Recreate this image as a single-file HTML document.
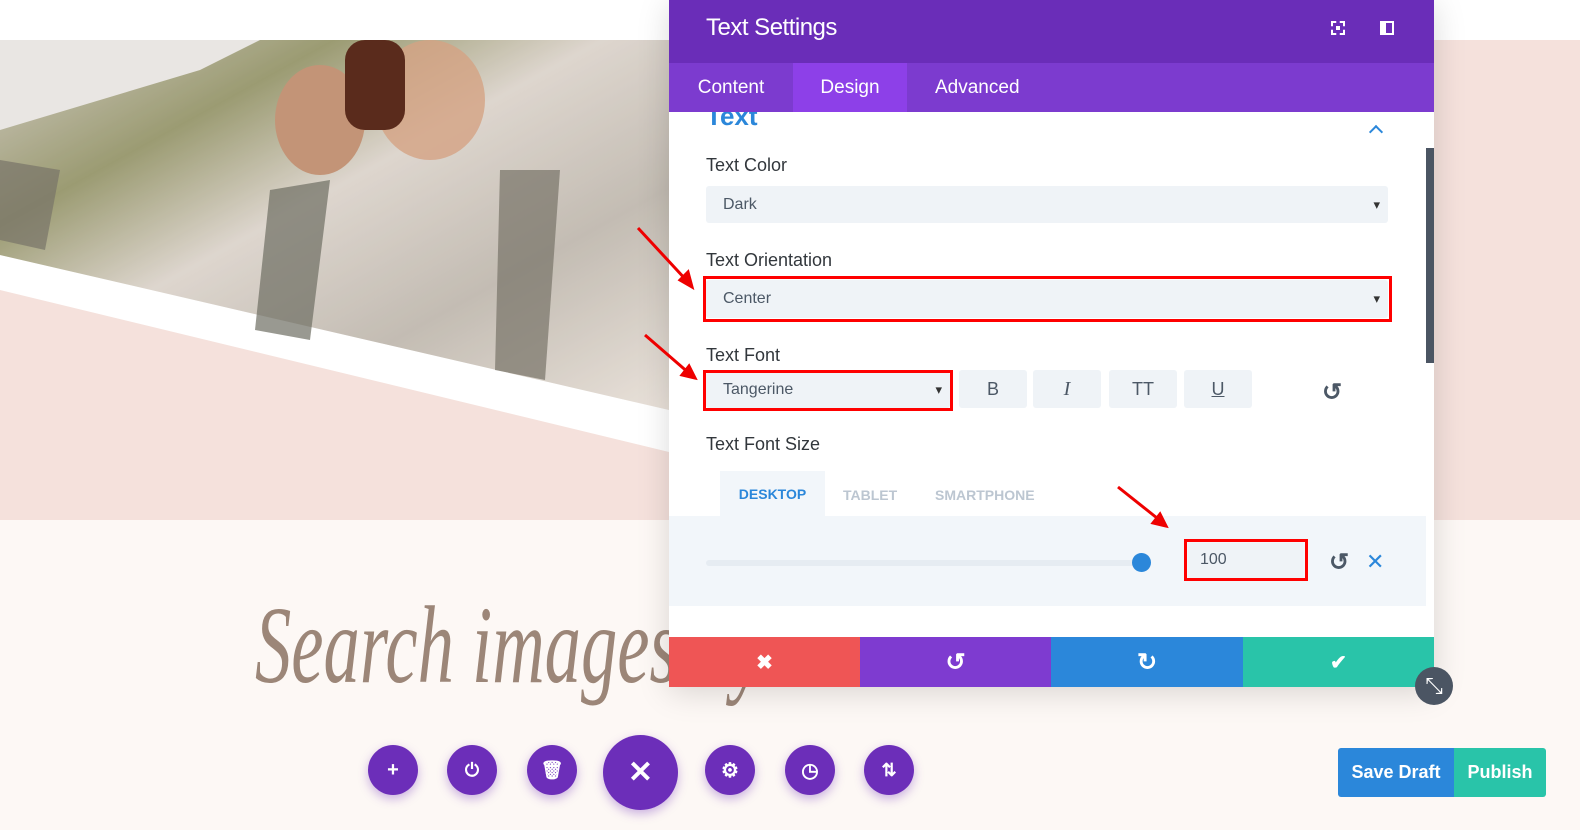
<!DOCTYPE html>
<html><head><meta charset="utf-8"><style>
*{margin:0;padding:0;box-sizing:border-box}
body{width:1580px;height:830px;overflow:hidden;position:relative;background:#fdf8f5;font-family:"Liberation Sans",sans-serif}
.abs{position:absolute}
.lbl{position:absolute;left:37px;font-size:18px;color:#32373c}
.sel{position:absolute;background:#eff3f7;border-radius:3px;font-size:16px;color:#4c5866;padding-left:17px;display:flex;align-items:center}
.sel:after{content:"▾";position:absolute;right:8px;font-size:13px;color:#333}
.red{position:absolute;border:3px solid #f00}
.fb{position:absolute;top:370px;width:68px;height:38px;background:#eff3f7;border-radius:3px;display:flex;align-items:center;justify-content:center;font-size:18px;color:#4c5866}
.circ{position:absolute;width:50px;height:50px;border-radius:50%;background:#6c2eb9;box-shadow:0 4px 10px rgba(108,46,185,.35);display:flex;align-items:center;justify-content:center;color:#fff;font-size:20px;font-weight:bold}
</style></head><body>
<div class="abs" style="left:0;top:0;width:1580px;height:40px;background:#fff"></div>
<div class="abs" style="left:0;top:40px;width:1580px;height:480px;background:#f5e1dc"></div>
<svg class="abs" style="left:0;top:40px" width="669" height="420">
<defs><linearGradient id="g" x1="0" y1="0" x2="1" y2="1">
<stop offset="0" stop-color="#c9c2b8"/><stop offset=".25" stop-color="#8a8a5a"/><stop offset=".45" stop-color="#d8cfc6"/><stop offset=".7" stop-color="#b9b1a6"/><stop offset="1" stop-color="#e6ddd4"/></linearGradient></defs>
<polygon points="0,205 0,250 669,412 669,360" fill="#fff"/>
<polygon points="0,0 669,0 669,370 0,215" fill="url(#g)"/>
<polygon points="0,0 669,0 669,370 0,215" fill="#ffffff" opacity=".15"/>
<polygon points="0,0 260,0 200,30 0,90" fill="#e9e6e3"/>
<ellipse cx="320" cy="80" rx="45" ry="55" fill="#c39477"/>
<ellipse cx="430" cy="60" rx="55" ry="60" fill="#d4a383" opacity=".8"/>
<rect x="345" y="0" width="60" height="90" rx="20" fill="#5a2b1c"/>
<polygon points="270,150 330,140 310,300 255,290" fill="#6e6e63" opacity=".7"/>
<polygon points="500,130 560,130 545,340 495,330" fill="#777468" opacity=".7"/>
<polygon points="0,120 60,130 45,210 0,200" fill="#777468" opacity=".7"/>
</svg>
<div class="abs" style="left:0;top:520px;width:1580px;height:310px;background:#fdf8f5"></div>
<div class="abs" style="left:255px;top:582px;font-family:'Liberation Serif',serif;font-style:italic;font-size:110px;color:#9c8678;white-space:nowrap;transform:scaleX(0.66);transform-origin:0 0">Search images by last name</div>

<!-- panel -->
<div class="abs" style="left:669px;top:0;width:765px;height:687px;background:#fff;box-shadow:0 5px 30px rgba(0,0,0,.15);overflow:hidden">
 <div class="abs" style="left:0;top:0;width:765px;height:63px;background:#6a2db8"></div>
 <div class="abs" style="left:37px;top:14px;font-size:24px;color:#fff;letter-spacing:-.5px">Text Settings</div>
 <div class="abs" style="left:662px;top:21px;width:14px;height:14px;border:2px dashed #fff"><div style="margin:3px;width:4px;height:4px;background:#fff"></div></div>
 <div class="abs" style="left:711px;top:21px;width:14px;height:14px;border:2px solid #fff;border-left-width:6px"></div>
 <div class="abs" style="left:0;top:63px;width:765px;height:49px;background:#7c3bcf"></div>
 <div class="abs" style="left:0;top:63px;width:124px;height:49px;background:#7c3bcf;color:#fff;font-size:19px;display:flex;align-items:center;justify-content:center">Content</div>
 <div class="abs" style="left:124px;top:63px;width:114px;height:49px;background:#8d40e8;color:#fff;font-size:19px;display:flex;align-items:center;justify-content:center">Design</div>
 <div class="abs" style="left:266px;top:63px;height:49px;color:#fff;font-size:19px;display:flex;align-items:center">Advanced</div>
 <div class="abs" style="left:37px;font-size:26px;color:#2b87da;font-weight:bold;height:16px;overflow:hidden;top:112px"><div style="margin-top:-11px">Text</div></div>
 <div class="abs" style="left:702px;top:127px;width:10px;height:10px;border-left:2.5px solid #2b87da;border-top:2.5px solid #2b87da;transform:rotate(45deg)"></div>
 <div class="abs" style="left:757px;top:148px;width:8px;height:215px;background:#4b5563"></div>
 <div class="lbl" style="top:155px">Text Color</div>
 <div class="sel" style="left:37px;top:186px;width:682px;height:37px">Dark</div>
 <div class="lbl" style="top:250px">Text Orientation</div>
 <div class="sel" style="left:37px;top:280px;width:682px;height:38px">Center</div>
 <div class="red" style="left:34px;top:276px;width:689px;height:46px"></div>
 <div class="lbl" style="top:345px">Text Font</div>
 <div class="sel" style="left:37px;top:372px;width:244px;height:36px">Tangerine</div>
 <div class="red" style="left:34px;top:370px;width:250px;height:41px"></div>
 <div class="fb" style="left:290px">B</div>
 <div class="fb" style="left:364px;font-style:italic;font-family:'Liberation Serif',serif;font-size:20px">I</div>
 <div class="fb" style="left:440px">TT</div>
 <div class="fb" style="left:515px;text-decoration:underline">U</div>
 <div class="abs" style="left:653px;top:378px;font-size:24px;color:#4c5866;font-weight:bold">↺</div>
 <div class="lbl" style="top:434px">Text Font Size</div>
 <div class="abs" style="left:0;top:516px;width:757px;height:90px;background:#f2f6fa"></div>
 <div class="abs" style="left:51px;top:471px;width:105px;height:45px;background:#f2f6fa;color:#2b87da;font-weight:bold;font-size:14px;display:flex;align-items:center;justify-content:center">DESKTOP</div>
 <div class="abs" style="left:174px;top:487px;color:#bcc6d1;font-weight:bold;font-size:14px">TABLET</div>
 <div class="abs" style="left:266px;top:487px;color:#bcc6d1;font-weight:bold;font-size:14px">SMARTPHONE</div>
 <div class="abs" style="left:37px;top:560px;width:440px;height:6px;background:#e6ecf2;border-radius:3px"></div>
 <div class="abs" style="left:463px;top:553px;width:19px;height:19px;border-radius:50%;background:#2b87da"></div>
 <div class="abs" style="left:519px;top:543px;width:115px;height:35px;background:#eff3f7;font-size:16px;color:#4c5866;padding:8px 12px">100</div>
 <div class="red" style="left:515px;top:539px;width:124px;height:42px"></div>
 <div class="abs" style="left:660px;top:548px;font-size:24px;color:#4c5866;font-weight:bold">↺</div>
 <div class="abs" style="left:697px;top:549px;font-size:22px;color:#2b87da">✕</div>
 <div class="abs" style="left:0;top:637px;width:191px;height:50px;background:#ef5555;color:#fff;font-size:20px;font-weight:bold;display:flex;align-items:center;justify-content:center">✖</div>
 <div class="abs" style="left:191px;top:637px;width:191px;height:50px;background:#7e3bd0;color:#fff;font-size:24px;font-weight:bold;display:flex;align-items:center;justify-content:center">↺</div>
 <div class="abs" style="left:382px;top:637px;width:192px;height:50px;background:#2b87da;color:#fff;font-size:24px;font-weight:bold;display:flex;align-items:center;justify-content:center">↻</div>
 <div class="abs" style="left:574px;top:637px;width:191px;height:50px;background:#29c4a9;color:#fff;font-size:20px;font-weight:bold;display:flex;align-items:center;justify-content:center">✔</div>
</div>
<div class="abs" style="left:1415px;top:667px;width:38px;height:38px;border-radius:50%;background:#4b5563;color:#fff;font-size:22px;display:flex;align-items:center;justify-content:center">⤡</div>

<svg class="abs" style="left:0;top:0" width="1580" height="830">
<g stroke="#e00" stroke-width="3" fill="#e00">
<line x1="638" y1="228" x2="688" y2="282"/><polygon points="692,287 680,280 688,272"/>
<line x1="645" y1="335" x2="690" y2="374"/><polygon points="695,378 682,375 689,366"/>
<line x1="1118" y1="487" x2="1162" y2="522"/><polygon points="1166,526 1153,523 1160,514"/>
</g></svg>

<div class="circ" style="left:368px;top:745px">+</div>
<div class="circ" style="left:447px;top:745px;font-size:18px">⏻</div>
<div class="circ" style="left:527px;top:745px;font-size:18px">🗑</div>
<div class="circ" style="left:603px;top:735px;width:75px;height:75px;font-size:30px">✕</div>
<div class="circ" style="left:705px;top:745px">⚙</div>
<div class="circ" style="left:785px;top:745px;font-size:20px">◷</div>
<div class="circ" style="left:864px;top:745px;font-size:18px">⇅</div>

<div class="abs" style="left:1338px;top:748px;width:116px;height:49px;background:#2b87da;color:#fff;font-size:18px;font-weight:bold;display:flex;align-items:center;justify-content:center;border-radius:3px 0 0 3px">Save Draft</div>
<div class="abs" style="left:1454px;top:748px;width:92px;height:49px;background:#29c4a9;color:#fff;font-size:18px;font-weight:bold;display:flex;align-items:center;justify-content:center;border-radius:0 3px 3px 0">Publish</div>
</body></html>
